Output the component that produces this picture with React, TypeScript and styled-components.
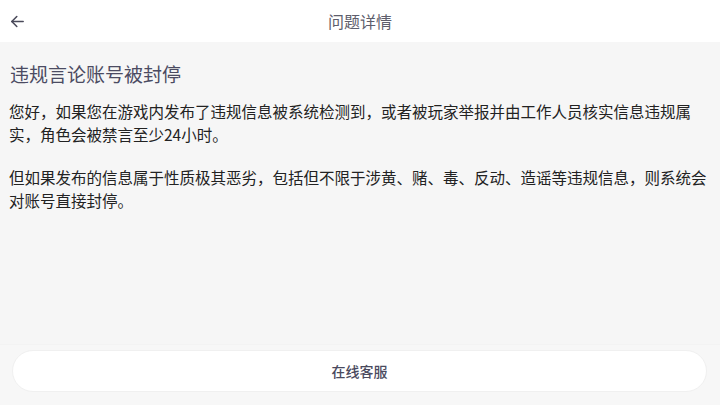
import React from "react";
import styled, { createGlobalStyle } from "styled-components";

const Global = createGlobalStyle`
  html, body { margin: 0; padding: 0; }
  body {
    background: #f6f6f6;
    font-family: "Noto Sans CJK SC", "Noto Sans", sans-serif;
  }
  * { box-sizing: border-box; }
`;

const Page = styled.div`
  display: flex;
  flex-direction: column;
  height: 405px;
  width: 720px;
  background: #f6f6f6;
`;

const Header = styled.header`
  height: 42px;
  background: #ffffff;
  display: grid;
  grid-template-columns: 60px 1fr 60px;
  align-items: center;
  flex-shrink: 0;
`;

const BackButton = styled.div`
  display: flex;
  align-items: center;
  padding-left: 9px;
  color: #4a4a5a;
`;

const HeaderTitle = styled.h1`
  margin: 0;
  text-align: center;
  font-size: 16px;
  font-weight: 400;
  color: #5e5e6c;
`;

const Content = styled.main`
  flex: 1;
  padding: 19px 3px 0 9px;
`;

const Heading = styled.h2`
  margin: 0 0 13px 1px;
  font-size: 19px;
  line-height: 26px;
  font-weight: 400;
  color: #4b4b62;
`;

const Paragraph = styled.p`
  margin: 0 0 20px;
  font-size: 15.5px;
  line-height: 23px;
  color: #222222;
`;

const Footer = styled.footer`
  padding: 5px 13px 13px 12px;
  background: #f7f7f7;
  border-top: 1px solid #f3f3f3;
`;

const ServiceButton = styled.button`
  width: 100%;
  height: 42px;
  border-radius: 21px;
  border: 1px solid #f0f0f0;
  background: #ffffff;
  font-family: inherit;
  font-size: 14px;
  font-weight: 500;
  color: #4a4a5e;
  display: flex;
  align-items: center;
  justify-content: center;
`;

const ArrowIcon = () => (
  <svg width="17" height="17" viewBox="0 0 24 24" fill="none" stroke="currentColor" strokeWidth="2.2" strokeLinecap="round" strokeLinejoin="round">
    <path d="M20 12H4" />
    <path d="M11 5l-7 7 7 7" />
  </svg>
);

export default function App() {
  return (
    <Page>
      <Global />
      <Header>
        <BackButton>
          <ArrowIcon />
        </BackButton>
        <HeaderTitle>问题详情</HeaderTitle>
        <div />
      </Header>
      <Content>
        <Heading>违规言论账号被封停</Heading>
        <Paragraph>
          您好，如果您在游戏内发布了违规信息被系统检测到，或者被玩家举报并由工作人员核实信息违规属实，角色会被禁言至少24小时。
        </Paragraph>
        <Paragraph>
          但如果发布的信息属于性质极其恶劣，包括但不限于涉黄、赌、毒、反动、造谣等违规信息，则系统会对账号直接封停。
        </Paragraph>
      </Content>
      <Footer>
        <ServiceButton>在线客服</ServiceButton>
      </Footer>
    </Page>
  );
}
